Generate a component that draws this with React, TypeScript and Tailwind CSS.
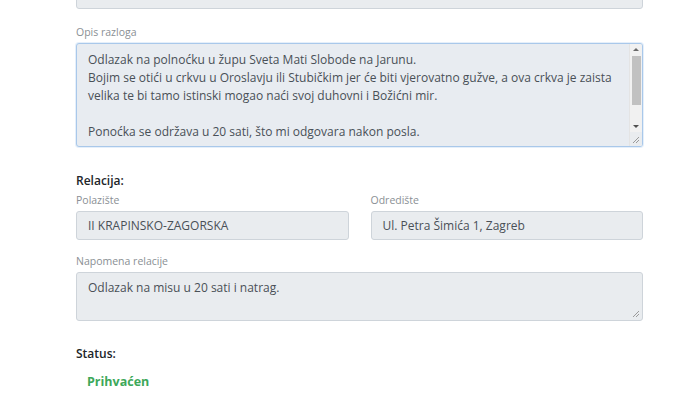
import React from 'react'

const font = { fontFamily: '"Open Sans", "Noto Sans", sans-serif' }

function Label({ children }: { children: React.ReactNode }) {
  return <div className="text-[10.5px] leading-[14px] text-[#8a8f94] mb-[4px]">{children}</div>
}

function Grip() {
  return (
    <svg width="9" height="9" viewBox="0 0 9 9" className="absolute right-[2px] bottom-[2px]">
      <path d="M8 2 L2 8 M8 5 L5 8" stroke="#9a9a9a" strokeWidth="1" />
    </svg>
  )
}

function Scrollbar() {
  return (
    <div className="relative w-[13px] flex flex-col items-center bg-[#f1f1f1] border-l border-[#e4e4e4]">
      <div className="h-[11px] flex items-center justify-center">
        <div className="w-0 h-0 border-l-[3px] border-r-[3px] border-b-[3px] border-l-transparent border-r-transparent border-b-[#6a6a6a]" />
      </div>
      <div className="w-[9px] h-[49px] mt-[1px] bg-[#c1c1c1]" />
      <div className="flex-1" />
      <div className="h-[11px] flex items-center justify-center">
        <div className="w-0 h-0 border-l-[3px] border-r-[3px] border-t-[3px] border-l-transparent border-r-transparent border-t-[#505050]" />
      </div>
      <div className="h-[14px] w-full relative bg-[#e9ecef]">
        <Grip />
      </div>
    </div>
  )
}

export default function App() {
  return (
    <div className="w-[698px] h-[400px] bg-white overflow-hidden" style={font}>
      <div className="w-[567px] ml-[76px]">
        {/* clipped field above */}
        <div className="h-[9px] overflow-hidden flex flex-col justify-end">
          <div className="h-[30px] shrink-0 rounded-[3px] border border-[#ced4da] bg-[#e9ecef]" />
        </div>

        <div className="mt-[16px]">
          <Label>Opis razloga</Label>
          <div className="h-[104px] flex rounded-[3px] border border-[#a9c8ea] bg-[#e8ecf1] overflow-hidden shadow-[0_0_0_1px_rgba(180,210,240,0.35)]">
            <div className="flex-1 pl-[11px] pr-[8px] pt-[7px] text-[12px] leading-[18px] text-[#495057] overflow-hidden">
              <div>Odlazak na polnoćku u župu Sveta Mati Slobode na Jarunu.</div>
              <div>Bojim se otići u crkvu u Oroslavju ili Stubičkim jer će biti vjerovatno gužve, a ova crkva je zaista velika te bi tamo istinski mogao naći svoj duhovni i Božićni mir.</div>
              <div className="h-[18px]" />
              <div>Ponoćka se održava u 20 sati, što mi odgovara nakon posla.</div>
            </div>
            <Scrollbar />
          </div>
        </div>

        <div className="mt-[26px] text-[12px] font-semibold text-[#212529] leading-[16px]">Relacija:</div>
        <div className="mt-[4px] grid grid-cols-2 gap-[22px]">
          <div>
            <Label>Polazište</Label>
            <div className="h-[29px] flex items-center rounded-[3px] border border-[#ced4da] bg-[#e9ecef] px-[11px] text-[12px] text-[#495057]">
              II KRAPINSKO-ZAGORSKA
            </div>
          </div>
          <div>
            <Label>Odredište</Label>
            <div className="h-[29px] flex items-center rounded-[3px] border border-[#ced4da] bg-[#e9ecef] px-[11px] text-[12px] text-[#495057]">
              Ul. Petra Šimića 1, Zagreb
            </div>
          </div>
        </div>

        <div className="mt-[14px]">
          <Label>Napomena relacije</Label>
          <div className="relative h-[49px] rounded-[3px] border border-[#ced4da] bg-[#e9ecef] pl-[11px] pt-[6px] text-[12px] leading-[18px] text-[#495057]">
            Odlazak na misu u 20 sati i natrag.
            <Grip />
          </div>
        </div>

        <div className="mt-[25px] text-[12px] font-semibold text-[#212529] leading-[16px]">Status:</div>
        <div className="mt-[11px] ml-[11px] text-[12.5px] font-bold text-[#3da85a] leading-[18px]">Prihvaćen</div>
      </div>
    </div>
  )
}
